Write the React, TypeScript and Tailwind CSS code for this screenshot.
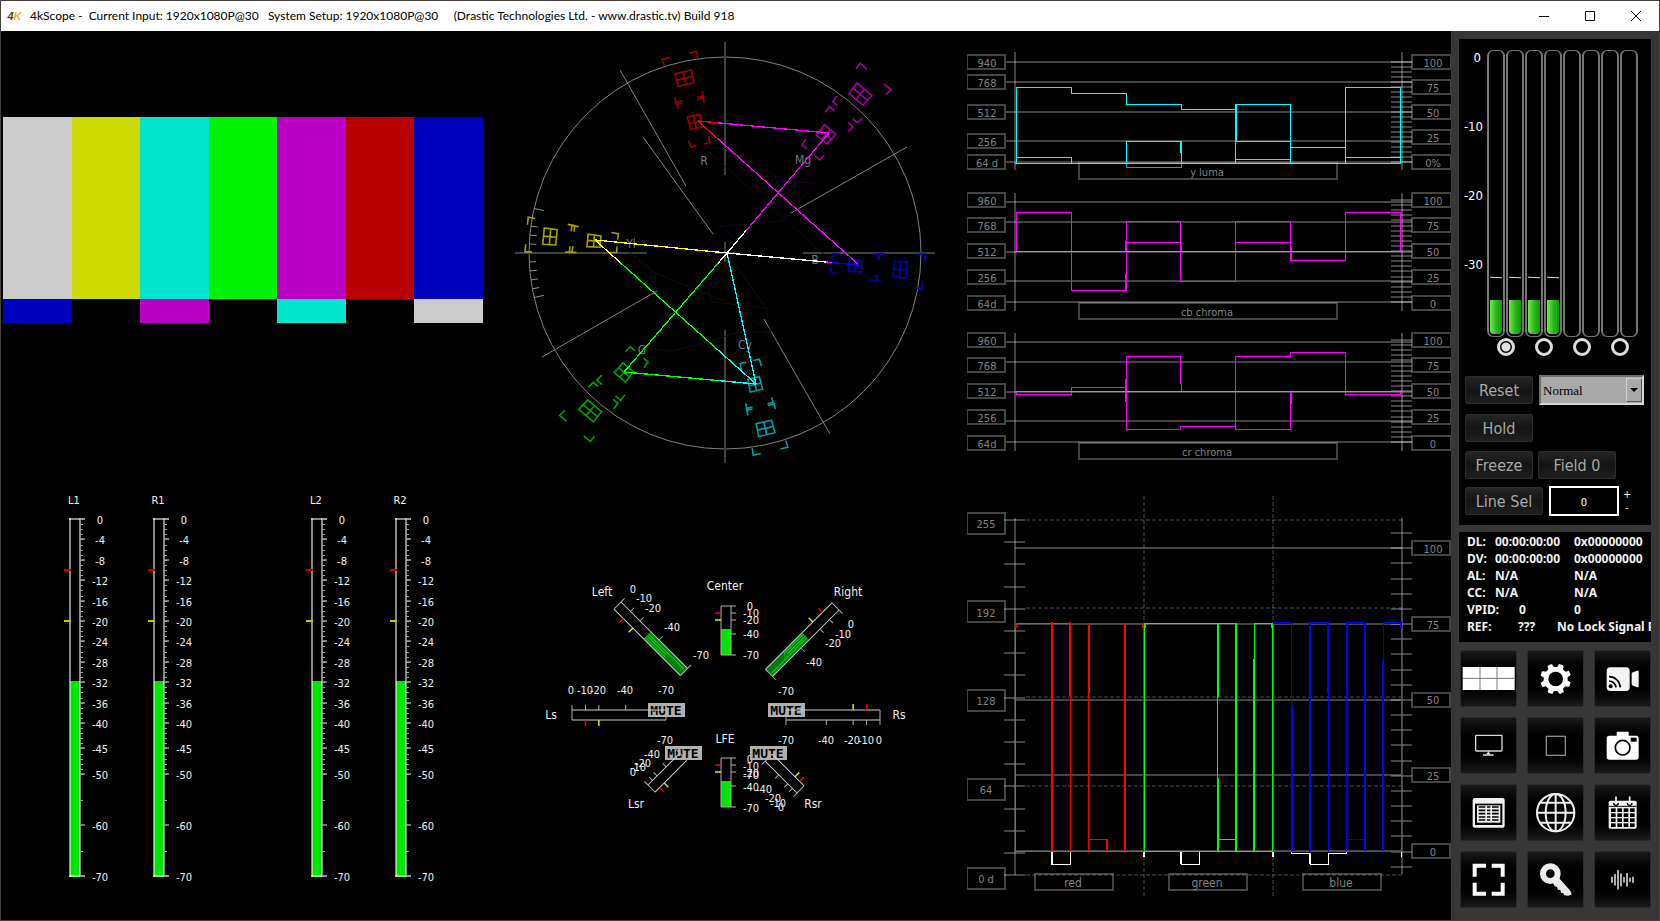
import React, { useState } from 'react';

type Point = [number, number];

const GRID = '#ffffff44';
const FONT = "font-['DejaVu_Sans_Condensed','Noto_Sans',sans-serif]";

const Scope: React.FC<{ label: string; viewBox: string; children: React.ReactNode }> = ({ label, viewBox, children }) => (
  <svg
    role="img"
    aria-label={label}
    viewBox={viewBox}
    className={`block size-full min-h-0 min-w-0 text-[11px] ${FONT}`}
  >
    {children}
  </svg>
);

/* ---------- picture ---------- */

const BARS = ['bg-[#cccccc]', 'bg-[#cedb00]', 'bg-[#00e6cc]', 'bg-[#00f200]', 'bg-[#b900c4]', 'bg-[#b80000]', 'bg-[#0000c0]'];
const CASTELLATIONS = ['bg-[#0000c0]', 'bg-black', 'bg-[#b900c4]', 'bg-black', 'bg-[#00e6cc]', 'bg-black', 'bg-[#cccccc]'];

const Picture: React.FC = () => (
  <div className="flex min-h-0 min-w-0 items-center px-0.5 pb-0.5">
    <div className="flex aspect-video w-full flex-col">
      <div className="flex h-[67.5%]">
        {BARS.map((color, i) => <div key={i} className={`flex-1 ${color}`} />)}
      </div>
      <div className="flex h-[8.8%]">
        {CASTELLATIONS.map((color, i) => <div key={i} className={`flex-1 ${color}`} />)}
      </div>
    </div>
  </div>
);

/* ---------- vectorscope ---------- */

const CX = 725;
const CY = 253;

// One colour box: a small grid at its centre and four corner brackets around it
const Target: React.FC<{ at: Point; color: string }> = ({ at, color }) => {
  const r = Math.hypot(at[0], at[1]);
  const angle = (Math.atan2(at[1], at[0]) * 180) / Math.PI;
  const t = (radius: number, deg: number) => radius * Math.tan((deg * Math.PI) / 180);
  const a = r - 6.5;
  const b = r + 6.5;
  const near = r - 23.5;
  const far = r + 23.5;
  return (
    <g transform={`translate(${CX} ${CY}) rotate(${angle})`} fill="none" stroke={color} strokeWidth="1.6">
      <path d={`M${a} ${-t(a, 2.6)}L${b} ${-t(b, 2.6)}V${t(b, 2.6)}L${a} ${t(a, 2.6)}ZM${a} 0H${b}M${r} ${-t(r, 2.6)}V${t(r, 2.6)}`} />
      {[-1, 1].map(s => (
        <path
          key={s}
          d={`M${near + 7} ${s * t(near + 7, 5)}L${near} ${s * t(near, 5)}v${-s * 6}M${far - 7} ${s * t(far - 7, 5)}L${far} ${s * t(far, 5)}v${-s * t(far, 2.2)}`}
        />
      ))}
    </g>
  );
};

const TARGETS: { color: string; points: Point[] }[] = [
  { color: '#a00000', points: [[-30, -131], [-40.3, -174.7]] },
  { color: '#a000a0', points: [[101, -118.5], [135.3, -158.7]] },
  { color: '#a0a000', points: [[-131, -12], [-175, -16.3]] },
  { color: '#0000b0', points: [[130, 12.5], [175, 16.5]] },
  { color: '#00a000', points: [[-101, 119.3], [-134.7, 157.7]] },
  { color: '#00a0a0', points: [[30, 131.3], [40.3, 175.3]] },
];

// Trace from a to b that changes colour where it crosses the given x values
const VECTORS: { from: Point; to: Point; parts: [number, string][] }[] = [
  { from: [698, 121], to: [829, 133], parts: [[718, '#ff0000'], [829, '#ff00ff']] },
  { from: [698, 121], to: [859, 265], parts: [[718, '#ff0000'], [859, '#ff00ff']] },
  { from: [727, 253], to: [859, 265], parts: [[826, '#ffffff'], [832, '#ff00ff'], [859, '#0000ff']] },
  { from: [727, 253], to: [829, 133], parts: [[746, '#ffffff'], [829, '#ff00ff']] },
  { from: [595, 240], to: [727, 253], parts: [[718, '#ffff00'], [727, '#ffffff']] },
  { from: [595, 240], to: [756, 384], parts: [[620, '#ffff00'], [718, '#00ff00'], [756, '#00ffff']] },
  { from: [624, 372], to: [727, 253], parts: [[718, '#00ff00'], [727, '#ffffff']] },
  { from: [624, 372], to: [756, 384], parts: [[718, '#00ff00'], [756, '#00ffff']] },
  { from: [727, 253], to: [756, 384], parts: [[728, '#ffffff'], [756, '#00ffff']] },
];

const VECTOR_LABELS: [string, number, number][] = [
  ['R', 704, 165], ['Mg', 803, 164], ['Yl', 631, 248], ['B', 815, 264], ['G', 642, 354], ['Cy', 745, 349],
];

const Vectorscope: React.FC = () => (
  <Scope label="Vectorscope" viewBox="485 31 482 444">
    <circle cx={CX} cy={CY} r="196" fill="none" stroke="#808080" />
    <path
      d="M725 42V175M725 242V262M725 330V463M515 253H647M715 253H735M803 253H935"
      stroke="#404040"
      strokeWidth="2"
    />
    <path
      d="M620 70L686 186M643 137L713 234M907 147L791 213M657 291L542 357M764 319L830 434"
      stroke="#808080"
    />
    {[-5, -3, -2, -1, 1, 2, 3, 4, 5].map(k => {
      const a = (k * 2.63 * Math.PI) / 180;
      const inner = Math.abs(k) === 5 ? 186 : 189;
      return (
        <line
          key={k}
          x1={CX - 196 * Math.cos(a)}
          y1={CY + 196 * Math.sin(a)}
          x2={CX - inner * Math.cos(a)}
          y2={CY + inner * Math.sin(a)}
          stroke="#909090"
        />
      );
    })}
    <path d="M703 147L732 149L783 181L815 183L783 221L721 226L700 250M703 147L826 256M721 226L748 250" fill="none" stroke="#16041a" />
    <path d="M622 246L655 273L735 305L771 334L766 308L712 302L707 281M650 349L674 351L740 332H771M766 308L727 253" fill="none" stroke="#04150c" />
    {VECTOR_LABELS.map(([name, x, y]) => (
      <text key={name} x={x} y={y} textAnchor="middle" fill="#787878" fontSize="12">{name}</text>
    ))}
    {TARGETS.map(({ color, points }) => points.map((at, i) => <Target key={`${color}${i}`} at={at} color={color} />))}
    <g shapeRendering="crispEdges" strokeWidth="1.3">
      {VECTORS.map(({ from, to, parts }, i) => {
        const yAt = (x: number) => from[1] + ((to[1] - from[1]) * (x - from[0])) / (to[0] - from[0]);
        return parts.map(([x, color], j) => {
          const start = j === 0 ? from[0] : parts[j - 1][0];
          return <line key={`${i}-${j}`} x1={start} y1={yAt(start)} x2={x} y2={yAt(x)} stroke={color} />;
        });
      })}
    </g>
  </Scope>
);

/* ---------- waveforms ---------- */

interface WaveProps {
  title: string;
  top: number;
  bottom: number;
  lines: number[];
  left: [string, number][];
  right: [string, number][];
  firstTick: number;
  tickStep: number;
  titleTop: number;
}

const Graticule: React.FC<WaveProps> = ({ title, top, bottom, lines, left, right, firstTick, tickStep, titleTop }) => (
  <g>
    <g fill="none" stroke={GRID} strokeWidth="2" shapeRendering="crispEdges">
      {lines.map(y => <path key={y} d={`M1006 ${y}H1412`} />)}
      <path d={`M1015 ${top}V${bottom}M1402 ${top}V${bottom}`} />
      {Array.from({ length: 21 }, (_, i) => (
        <path key={i} d={`M1391 ${Math.round(firstTick + i * tickStep)}h21`} />
      ))}
      {left.map(([text, y]) => <rect key={text} x="967" y={y} width="38" height="14" />)}
      {right.map(([text, y]) => <rect key={text} x="1412" y={y} width="39" height="14" />)}
      <rect x="1079" y={titleTop} width="258" height="16" />
    </g>
    <g fill="#808080" textAnchor="middle">
      {left.map(([text, y]) => <text key={text} x="987" y={y + 12}>{text}</text>)}
      {right.map(([text, y]) => <text key={text} x="1433" y={y + 12}>{text}</text>)}
      <text x="1207" y={titleTop + 13}>{title}</text>
    </g>
  </g>
);

const CHROMA_LEFT: [string, number][] = [['960', 193], ['768', 218], ['512', 244], ['256', 270], ['64d', 296]];
const CHROMA_RIGHT: [string, number][] = [['100', 193], ['75', 218], ['50', 244], ['25', 270], ['0', 296]];
const CHROMA_LINES = [202, 222, 252, 281, 302];

const Waveforms: React.FC = () => (
  <Scope label="Waveforms" viewBox="967 31 484 444">
    <Graticule
      title="y luma"
      top={52}
      bottom={170}
      lines={[62, 82, 112, 141, 162]}
      left={[['940', 55], ['768', 75], ['512', 105], ['256', 134], ['64 d', 155]]}
      right={[['100', 55], ['75', 80], ['50', 105], ['25', 130], ['0%', 155]]}
      firstTick={62}
      tickStep={5}
      titleTop={163}
    />
    <Graticule
      title="cb chroma"
      top={193}
      bottom={311}
      lines={CHROMA_LINES}
      left={CHROMA_LEFT}
      right={CHROMA_RIGHT}
      firstTick={200}
      tickStep={5.1}
      titleTop={303}
    />
    <g transform="translate(0 140)">
      <Graticule
        title="cr chroma"
        top={193}
        bottom={311}
        lines={CHROMA_LINES}
        left={CHROMA_LEFT}
        right={CHROMA_RIGHT}
        firstTick={200}
        tickStep={5.1}
        titleTop={303}
      />
    </g>
    <g fill="none" shapeRendering="crispEdges">
      <path d="M1126.5 163V167.5H1181.5V163" stroke="#808080" />
      <path
        d="M1015 163.5H1401M1016.5 163V87.5H1071.5V93.5H1126.5V104.5H1181.5V109.5H1235.5M1235.5 163V104.5H1290.5V163M1290.5 147.5H1345.5M1345.5 163V87.5H1400.5V163M1016.5 157.5H1071.5V163M1126.5 163V141.5H1181.5V163M1180.5 141V153M1235.5 141.5H1290.5M1236.5 104V141M1235.5 159.5H1290.5M1345.5 157.5H1400.5"
        stroke="#00ffff"
      />
      <g stroke="#ff00ff">
        <path d="M1016.5 251V212.5H1071.5V290.5H1126.5V221.5H1180.5V281.5H1235.5V221.5H1290.5V260.5H1345.5V212.5H1400.5V251M1126.5 242.5H1180.5M1235.5 242.5H1290.5M1125.5 241V251M1125.5 274V290M1181.5 245V251M1291.5 247V260" />
        <path d="M1016.5 391V394.5H1071.5V387.5H1126.5M1126.5 356V429.5H1180.5V426.5H1235.5M1126.5 356.5H1180.5V384M1181.5 384V391M1235.5 429.5V356.5H1290.5V352.5H1345.5V394.5H1400.5V391M1235.5 429.5H1290.5V391M1125.5 379V402M1291.5 391V404" />
        <path d="M1015 251.5H1402M1015 391.5H1402" stroke="#ff50ff" />
      </g>
    </g>
  </Scope>
);

/* ---------- channel meters ---------- */

const DB_LABELS = [0, 4, 8, 12, 16, 20, 24, 28, 32, 36, 40, 45, 50, 60, 70];
const DB_MINOR = [...Array.from({ length: 50 }, (_, i) => i + 1), 55, 65];

const Meter: React.FC<{ name: string; x: number }> = ({ name, x }) => (
  <g transform={`translate(${x} 519)`}>
    <text x="4" y="-15" textAnchor="middle" fill="#f0f0f0">{name}</text>
    <rect x="0" y="162" width="10" height="196" fill="#00e600" />
    <path d="M0 -1V358M10 -1V358" stroke="#ffffff88" strokeWidth="2" />
    <path d="M-1 0H15M-1 357H15" stroke="#ffffff88" strokeWidth="2" />
    {DB_MINOR.map(db => <path key={db} d={`M10 ${Math.round(db * 5.1)}.5h3`} stroke="#a0a0a0" />)}
    {DB_LABELS.map(db => (
      <g key={db}>
        <path d={`M10 ${Math.round(db * 5.1)}h5`} stroke="#a0a0a0" strokeWidth="1.5" />
        <text x="30" y={Math.round(db * 5.1) + 5} textAnchor="middle" fill="#f0f0f0">{db ? `-${db}` : '0'}</text>
      </g>
    ))}
    <path d="M-6 51H1" stroke="#c80000" strokeWidth="2" />
    <path d="M-6 102H1" stroke="#c8c800" strokeWidth="2" />
  </g>
);

const ChannelMeters: React.FC = () => (
  <Scope label="Channel meters" viewBox="1 475 484 445">
    <Meter name="L1" x={70} />
    <Meter name="R1" x={154} />
    <Meter name="L2" x={312} />
    <Meter name="R2" x={396} />
  </Scope>
);

/* ---------- surround ---------- */

interface Speaker {
  name: string;
  nameAt: Point;
  at: Point; // the 0 dB corner on the scale side
  angle: number;
  length: number;
  level?: number;
  mute?: Point;
  scale: Point[];
}

const SCALE = [0, 10, 20, 40, 70];

const SPEAKERS: Speaker[] = [
  { name: 'Center', nameAt: [725, 586], at: [731, 606], angle: 90, length: 49, level: 26,
    scale: [[750, 606], [751, 613], [751, 620], [751, 634], [751, 655]] },
  { name: 'LFE', nameAt: [725, 739], at: [731, 758], angle: 90, length: 49, level: 26,
    scale: [[750, 759], [751, 766], [751, 773], [751, 787], [751, 808]] },
  { name: 'Left', nameAt: [602, 592], at: [621, 602], angle: 45, length: 94, level: 52,
    scale: [[633, 589], [644, 598], [653, 608], [672, 627], [701, 655]] },
  { name: 'Right', nameAt: [848, 592], at: [839, 610], angle: 135, length: 94, level: 52,
    scale: [[851, 624], [843, 634], [833, 643], [814, 662], [786, 691]] },
  { name: 'Ls', nameAt: [551, 715], at: [572, 710], angle: 0, length: 94, mute: [648, 703],
    scale: [[571, 690], [585, 690], [598, 690], [625, 690], [666, 690]] },
  { name: 'Rs', nameAt: [899, 715], at: [880, 720], angle: 180, length: 94, mute: [768, 703],
    scale: [[879, 740], [866, 740], [852, 740], [826, 740], [786, 740]] },
  { name: 'Lsr', nameAt: [636, 804], at: [648, 785], angle: -45, length: 45, mute: [665, 746],
    scale: [[633, 772], [638, 767], [643, 763], [652, 754], [665, 740]] },
  { name: 'Rsr', nameAt: [813, 804], at: [797, 793], angle: -135, length: 45, mute: [750, 746],
    scale: [[781, 807], [778, 803], [773, 798], [764, 789], [751, 775]] },
];

const Surround: React.FC = () => (
  <Scope label="Surround meters" viewBox="485 475 482 445">
    {SPEAKERS.map(({ name, nameAt, at, angle, length, level, mute, scale }) => {
      const pos = (db: number) => (db * length) / 70;
      const diagonal = angle % 90 !== 0;
      return (
        <g key={name}>
          <text x={nameAt[0]} y={nameAt[1] + 4} textAnchor="middle" fill="#f0f0f0" fontSize="12">{name}</text>
          {mute && (
            <g>
              <rect x={mute[0]} y={mute[1]} width="37" height="14" fill="#b0b0b0" />
              <text
                x={mute[0] + 18}
                y={mute[1] + 12}
                textAnchor="middle"
                fill="#000"
                className="font-['DejaVu_Sans_Mono',monospace] text-[13px] font-bold"
              >
                MUTE
              </text>
            </g>
          )}
          <g transform={`translate(${at[0]} ${at[1]}) rotate(${angle})`}>
            {level && <rect x={length - level} y="0" width={level} height="10" fill={diagonal ? '#007d0a' : '#00e600'} />}
            {level && diagonal && (
              <path
                d={`M${length - level} 3H${length - 2}M${length - level} 5.5H${length - 26}M${length - level} 8H${length - 24}`}
                stroke="#00d818"
              />
            )}
            <path d={`M0 0H${length}M0 10H${length}`} stroke={diagonal || mute ? '#d0d0d0' : '#b0b0b0'} />
            <path d={`M0 -5V10M${length} -5V10`} stroke="#b0b0b0" />
            {[10, 20, 40].map(db => <path key={db} d={`M${pos(db)} -5V0`} stroke="#b0b0b0" />)}
            <path d={`M${pos(10)} 10v6`} stroke="#f00000" strokeWidth="1.5" />
            <path d={`M${pos(20)} 10v6`} stroke="#e6e600" strokeWidth="1.5" />
          </g>
          {scale.map(([x, y], i) => (
            <text key={i} x={x} y={y + 4} textAnchor="middle" fill="#f0f0f0">{SCALE[i] ? `-${SCALE[i]}` : '0'}</text>
          ))}
        </g>
      );
    })}
  </Scope>
);

/* ---------- RGB parade ---------- */

const Parade: React.FC = () => (
  <Scope label="RGB parade" viewBox="967 475 484 445">
    <g fill="none" stroke={GRID} strokeWidth="2" shapeRendering="crispEdges">
      <path d="M1015 518V875M1402 518V874" />
      {Array.from({ length: 17 }, (_, i) => <path key={i} d={`M1004 ${Math.round(520 + i * 22.2)}h21`} />)}
      {Array.from({ length: 23 }, (_, i) => <path key={i} d={`M1391 ${Math.round(533 + i * 15.17)}h21`} />)}
      {[548, 624, 700, 775, 851].map(y => <path key={y} d={`M1015 ${y}H1402`} />)}
      {[513, 601, 690, 779, 868].map(y => <rect key={y} x="967" y={y} width="38" height="21" />)}
      {[548, 624, 700, 775, 851].map(y => <rect key={y} x="1412" y={y - 7} width="38" height="14" />)}
      {[1035, 1169, 1303].map(x => <rect key={x} x={x} y="874" width="78" height="16" />)}
    </g>
    <g stroke="#ffffff26" strokeWidth="2" strokeDasharray="4 2" shapeRendering="crispEdges">
      {[520, 608, 697, 786, 875].map(y => <path key={y} d={`M1026 ${y}H1402`} />)}
      <path d="M1144 496V896M1273 496V896" />
    </g>
    <g fill="#808080" textAnchor="middle">
      {['255', '192', '128', '64', '0 d'].map((text, i) => <text key={text} x="986" y={528 + Math.round(i * 88.7)}>{text}</text>)}
      {['100', '75', '50', '25', '0'].map((text, i) => <text key={text} x="1433" y={553 + Math.round(i * 75.7)}>{text}</text>)}
      <text x="1073" y="887" fontSize="12">red</text>
      <text x="1207" y="887" fontSize="12">green</text>
      <text x="1341" y="887" fontSize="12">blue</text>
    </g>
    <g fill="none" shapeRendering="crispEdges">
      <g stroke="#fff">
        <path d="M1051.5 852V864.5H1070.5V852M1052.5 852V864M1181.5 852V864.5H1199.5V852M1180.5 852V864M1291.5 852V853.5H1310.5V864.5H1328.5V853.5H1346.5V852M1309.5 853V864" />
        <path d="M1144 852V857M1273 852V857" strokeWidth="2" />
        <path d="M1401.5 852V857" />
      </g>
      <g stroke="#ff0000">
        <path d="M1070.5 623V851M1088.5 623.5V851M1088.5 623.5H1143M1089 839.5H1107M1143.5 623V851" />
        <path d="M1015.5 851V623.5H1070M1015 851.5H1144" stroke="#ff3030" />
        <path d="M1052 622V851M1125 623V851M1107 839V851M1070 622V696M1089 623V693M1016 623V628M1143 623V628" strokeWidth="2" />
      </g>
      <g stroke="#00ff00">
        <path d="M1144.5 851V623.5H1236M1217.5 623V851M1218 839.5H1236M1254.5 623.5H1272.5V851M1144 851.5H1273M1254.5 623V660" />
        <path d="M1145 623V628M1236 623V851M1254 659V851M1218 623V697M1218 778V851M1272 623V628" strokeWidth="2" />
      </g>
      <g stroke="#0000ff">
        <path d="M1291.5 623V851M1328.5 623V851M1346.5 623V851M1346 839.5H1365M1383.5 623V851" />
        <path d="M1273.5 623V851M1401.5 623V851M1273 851.5H1402" stroke="#3c3cff" />
        <path d="M1273 623H1291M1310 623H1329M1346 623H1365M1383 623H1402M1310 622V851M1365 623V851M1292 705V851M1328 623V693M1347 623V695M1383 660V851M1401 623V628" strokeWidth="2" />
      </g>
    </g>
  </Scope>
);

/* ---------- side panel ---------- */

const panelButton =
  'h-7 rounded-xs border border-[#2c2c2c] bg-linear-to-b from-[#262626] via-[#141414] to-[#202020] pt-0.5 text-base leading-6 text-[#a8a8a8]';

const Levels: React.FC = () => {
  const [pair, setPair] = useState(0);
  return (
    <div className="flex pt-2.5">
      <div className="flex w-6 flex-col text-right text-[13px] leading-[18px] text-white">
        {['0', '-10', '-20', '-30'].map(db => <span key={db} className={`h-[69px] ${db === '0' ? 'pr-0.5' : ''}`}>{db}</span>)}
      </div>
      <div className="ml-1 pt-px">
        <div className="flex h-[287px] gap-px">
          {Array.from({ length: 8 }, (_, i) => (
            <div key={i} className="flex w-[18px] flex-col justify-end rounded-md border-x-2 border-y border-[#747474] px-px pb-0.5">
              {i < 4 && (
                <>
                  <span className="mb-[22px] h-px rotate-3 bg-[#d8d8d8]" />
                  <span className="h-[34px] rounded-b-sm bg-linear-to-r from-[#72e84c] via-[#2cba1c] to-[#0a9a06]" />
                </>
              )}
            </div>
          ))}
        </div>
        <div className="grid grid-cols-4 gap-px pt-px pl-px">
          {[0, 1, 2, 3].map(i => (
            <input
              key={i}
              type="radio"
              name="pair"
              aria-label={`Channels ${i * 2 + 1} and ${i * 2 + 2}`}
              checked={pair === i}
              onChange={() => setPair(i)}
              className="size-[18px] appearance-none justify-self-center rounded-full border-[3px] border-[#dcdcdc] checked:bg-[radial-gradient(circle,#e0e0e0_0_4px,transparent_5px)]"
            />
          ))}
        </div>
      </div>
    </div>
  );
};

const Controls: React.FC = () => (
  <div className="flex flex-col gap-[7px] pt-[19px] pr-1.5 pb-[9px] pl-1.5">
    <div className="flex h-[30px] items-center gap-1.5">
      <button className={`w-[68px] ${panelButton}`}>Reset</button>
      <div className="relative h-[30px] w-[105px]">
        <select
          aria-label="Mode"
          className="size-full appearance-none border-2 border-t-[#6e6e6e] border-r-[#d6d6d6] border-b-[#d6d6d6] border-l-[#6e6e6e] bg-[#a9a9a9] pt-0.5 pl-0.5 font-['Liberation_Serif',serif] text-[13px] text-black"
        >
          <option>Normal</option>
        </select>
        <span className="pointer-events-none absolute inset-y-[3px] right-0.5 flex w-4 items-center justify-center border border-t-[#cfcfcf] border-r-[#555] border-b-[#555] border-l-[#cfcfcf]">
          <svg viewBox="0 0 8 4" className="h-1 w-2"><path d="M0 0H8L4 4Z" /></svg>
        </span>
      </div>
    </div>
    <div className="flex h-[30px] items-end">
      <button className={`w-[68px] ${panelButton}`}>Hold</button>
    </div>
    <div className="flex h-[30px] items-end gap-[5px]">
      <button className={`w-[68px] ${panelButton}`}>Freeze</button>
      <button className={`w-[78px] ${panelButton}`}>Field 0</button>
    </div>
    <div className="flex h-[30px] items-center">
      <button className={`w-[78px] ${panelButton}`}>Line Sel</button>
      <input
        aria-label="Line"
        defaultValue="0"
        className="mr-1 ml-1.5 h-[30px] w-[70px] border-2 border-white bg-black pt-0.5 text-center text-[11px] text-white"
      />
      <div className="flex flex-col text-[11px] leading-[13px]">
        <button aria-label="Next line" className="text-[#e0f2ff]">+</button>
        <button aria-label="Previous line" className="text-[#f0cf98]">-</button>
      </div>
    </div>
  </div>
);

const STATUS = [
  ['DL:', '00:00:00:00', '0x00000000'],
  ['DV:', '00:00:00:00', '0x00000000'],
  ['AL:', 'N/A', 'N/A'],
  ['CC:', 'N/A', 'N/A'],
];

const Status: React.FC = () => (
  <div className="h-[110px] overflow-hidden bg-black pt-px pl-2 font-['Noto_Sans',sans-serif] text-[12px] leading-[17px] font-bold whitespace-nowrap text-[#f2f2f2]">
    {STATUS.map(([name, a, b]) => (
      <div key={name} className="grid grid-cols-[28px_79px_1fr]">
        <span>{name}</span>
        <span>{a}</span>
        <span>{b}</span>
      </div>
    ))}
    <div className="grid grid-cols-[52px_55px_1fr]">
      <span>VPID:</span>
      <span>0</span>
      <span>0</span>
    </div>
    <div className="grid grid-cols-[51px_39px_1fr]">
      <span>REF:</span>
      <span>???</span>
      <span>No Lock Signal Present</span>
    </div>
  </div>
);

const gearPath = Array.from({ length: 8 }, (_, k) => {
  const base = k * 45 + 22.5;
  return ([[-17, 36], [-13, 38], [-10, 46], [6, 47], [10, 44], [13, 37], [17, 36]] as Point[])
    .map(([deg, r]) => {
      const a = ((base + deg) * Math.PI) / 180;
      return `${(86 + r * Math.cos(a)).toFixed(1)} ${(87 + r * Math.sin(a)).toFixed(1)}`;
    })
    .join('L');
}).join('L');

const TOOLS: { name: string; icon: React.ReactNode }[] = [
  {
    name: 'Layout',
    icon: (
      <>
        <path fill="#fff" d="M8 51H164V120H8Z" />
        <path stroke="#777" strokeWidth="3" d="M60 51V120M111 51V120M8 85H164" />
      </>
    ),
  },
  { name: 'Settings', icon: <path fill="#fff" fillRule="evenodd" d={`M${gearPath}ZM108 87a22 22 0 1 0 -44 0a22 22 0 1 0 44 0Z`} /> },
  {
    name: 'Stream',
    icon: (
      <>
        <rect x="38" y="52" width="69" height="71" rx="11" fill="#f4f4f4" />
        <path fill="#f4f4f4" d="M113 72Q113 68 117 67L130 62Q134 61 134 65V109Q134 113 130 112L117 107Q113 106 113 102Z" />
        <circle cx="50" cy="109" r="6" />
        <path fill="none" stroke="#000" strokeWidth="5" d="M45 93A21 21 0 0 1 66 112M45 80A34 34 0 0 1 79 112" />
      </>
    ),
  },
  {
    name: 'Display',
    icon: (
      <>
        <rect x="47" y="55" width="79" height="47" rx="2" fill="none" stroke="#d8d8d8" strokeWidth="4" />
        <path stroke="#d8d8d8" strokeWidth="4" d="M69 114H101M85 103V114" />
        <path stroke="#d8d8d8" strokeWidth="5" d="M80 110H90" />
      </>
    ),
  },
  { name: 'Stop', icon: <rect x="58" y="58" width="57" height="57" fill="none" stroke="#8a8a8a" strokeWidth="4" /> },
  {
    name: 'Snapshot',
    icon: (
      <>
        <path fill="#fff" d="M46 56H68V46Q68 44 70 44H102Q104 44 104 46V56H127Q134 56 134 64V121Q134 128 127 128H46Q38 128 38 121V64Q38 56 46 56Z" />
        <circle cx="86" cy="92" r="22" fill="none" stroke="#000" strokeWidth="5" />
        <path d="M110 62H128V74H110Z" />
      </>
    ),
  },
  {
    name: 'Table',
    icon: (
      <>
        <rect x="38" y="42" width="96" height="89" rx="6" fill="#f0f0f0" />
        <path d="M45 59H127V123H45Z" />
        <path fill="#f0f0f0" d="M51 64H121V116H51Z" />
        {[69, 79, 89, 99, 108].map(y => <path key={y} stroke="#000" strokeWidth="5" d={`M56 ${y}H76M81 ${y}H91M96 ${y}H116`} />)}
      </>
    ),
  },
  {
    name: 'Network',
    icon: (
      <g fill="none" stroke="#f0f0f0" strokeWidth="6">
        <circle cx="86" cy="86" r="56" />
        <ellipse cx="86" cy="86" rx="30" ry="56" />
        <path d="M30 86H142M86 30V142M40 56H132M40 116H132" />
      </g>
    ),
  },
  {
    name: 'Schedule',
    icon: (
      <>
        <rect x="44" y="50" width="84" height="84" rx="5" fill="#f4f4f4" />
        {[0, 1, 2, 3].map(r =>
          [0, 1, 2, 3].map(c => <rect key={`${r}${c}`} x={51 + c * 19} y={73 + r * 15} width={14} height={11} />)
        )}
        <path d="M44 67H128" stroke="#000" strokeWidth="3" />
        <path d="M59 57a7 7 0 0 0 14 0M100 57a7 7 0 0 0 14 0" fill="none" stroke="#000" strokeWidth="4" />
        <path d="M66 39V57M107 39V57" stroke="#f4f4f4" strokeWidth="5" strokeLinecap="round" />
      </>
    ),
  },
  {
    name: 'Full screen',
    icon: <path fill="none" stroke="#fff" strokeWidth="12" d="M78 44H44V77M95 44H128V77M44 95V128H78M128 95V128H95" />,
  },
  {
    name: 'Licence',
    icon: (
      <>
        <circle cx="70" cy="68" r="22" fill="none" stroke="#eee" strokeWidth="18" />
        <path fill="#e8e8e8" d="M78 96L96 81L130 119L134 130L124 134L112 133L109 127L102 125L100 117L93 116L90 108L83 106Z" />
      </>
    ),
  },
  {
    name: 'Audio',
    icon: (
      <path
        stroke="#d0d0d0"
        strokeWidth="5"
        strokeLinecap="round"
        d="M54 79V94M63 71V102M72 59V114M81 69V104M90 80V93M99 68V105M108 82V91M117 79V94"
      />
    ),
  },
];

const TitleBar: React.FC = () => (
  <header className="flex h-[30px] items-center bg-white text-black">
    <span className="flex w-[21px] justify-center pl-1.5 font-['Liberation_Sans',sans-serif] text-[11px] leading-none font-bold italic" aria-hidden="true">
      <span className="text-[#4a3f2c]">4</span>
      <span className="text-[#f0b400]">K</span>
    </span>
    <h1 className="ml-2 flex-1 font-['Lato',sans-serif] text-[12px] whitespace-pre">
      {'4kScope -  Current Input: 1920x1080P@30   System Setup: 1920x1080P@30     (Drastic Technologies Ltd. - www.drastic.tv) Build 918'}
    </h1>
    {[
      { name: 'Minimize', d: 'M0 5.5H10' },
      { name: 'Maximize', d: 'M.5 .5H9.5V9.5H.5Z' },
      { name: 'Close', d: 'M0 0L10 10M10 0L0 10' },
    ].map(({ name, d }) => (
      <button key={name} aria-label={name} className="flex h-full w-[46px] items-center justify-center">
        <svg viewBox="0 0 10 10" className="size-2.5" fill="none" stroke="#000"><path d={d} /></svg>
      </button>
    ))}
  </header>
);

export default function App() {
  return (
    <div className={`flex h-screen flex-col border border-[#45413d] bg-black ${FONT}`}>
      <TitleBar />
      <main className="flex min-h-0 flex-1">
        <div className="grid min-w-0 flex-1 grid-cols-[484fr_482fr_484fr] grid-rows-[444fr_445fr]">
          <Picture />
          <Vectorscope />
          <Waveforms />
          <ChannelMeters />
          <Surround />
          <Parade />
        </div>
        <aside className="flex w-52 flex-col gap-[7px] bg-[#373737] px-2 pt-2">
          <div className="bg-black">
            <Levels />
            <Controls />
          </div>
          <Status />
          <div className="mt-px grid grid-cols-3 gap-2.5 pl-px">
            {TOOLS.map(({ name, icon }) => (
              <button
                key={name}
                aria-label={name}
                className="aspect-square rounded-xs border border-[#2a2a2a] bg-linear-to-b from-[#1a1a1a] via-black to-[#1a1a1a]"
              >
                <svg viewBox="3 3 165 165" className="size-full">{icon}</svg>
              </button>
            ))}
          </div>
        </aside>
      </main>
    </div>
  );
}
